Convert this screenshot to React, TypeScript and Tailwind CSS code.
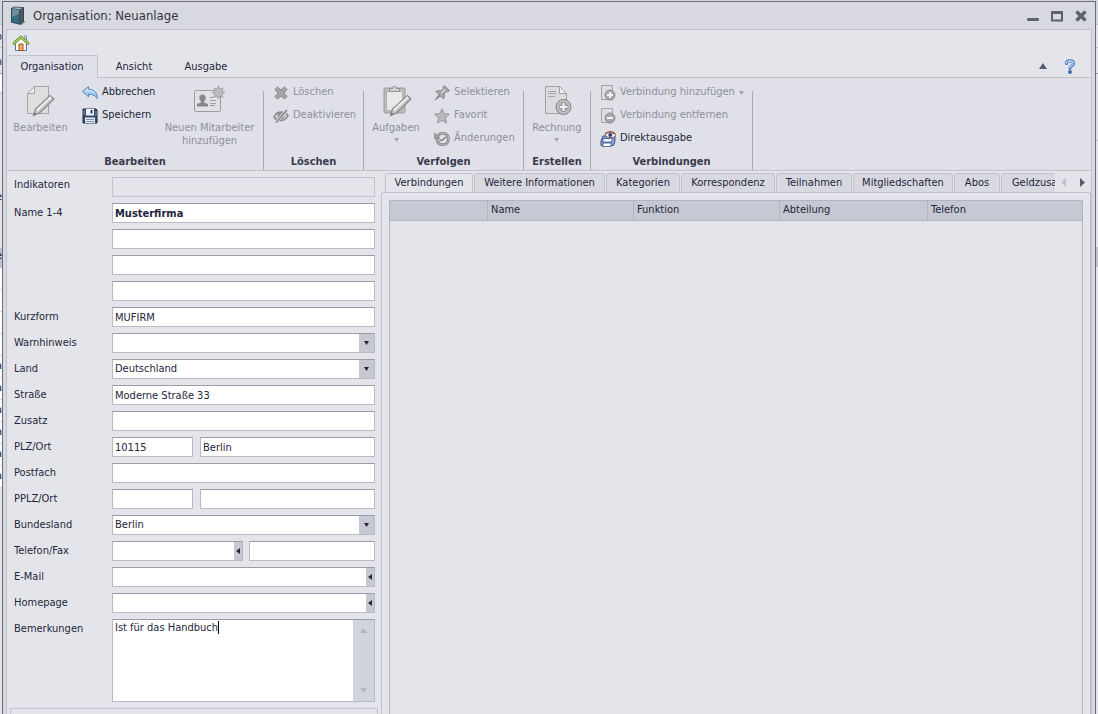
import React, { useState } from 'react';

type IconProps = { className?: string };

const HomeIcon = () => (
  <svg width="18" height="18" viewBox="0 0 18 18">
    <path d="M3.500 9v7.500h11V9L9 4z" fill="#fdfdff" stroke="#5a74ad" />
    <path d="M12.500 2h2v4l-2-2z" fill="#fff" stroke="#5a74ad" strokeWidth=".8" />
    <path d="M7 10h4v6.500H7z" fill="#f3b064" stroke="#a5501c" />
    <path d="M2 9.300L9 3l7 6.300" fill="none" stroke="#55801f" strokeWidth="2.800" strokeLinecap="round" strokeLinejoin="round" />
    <path d="M2 9.200L9 3l7 6.200" fill="none" stroke="#b9e066" strokeWidth="1.400" strokeLinecap="round" strokeLinejoin="round" />
  </svg>
);

const AppIcon = () => (
  <svg width="18" height="20" viewBox="0 0 18 20">
    <path d="M11 14l5 1.500-4 3.500z" fill="#8b8d96" opacity=".7" />
    <path d="M1 2l4-1.500 9 .8v14L10.500 19 1 16.500z" fill="#34464f" />
    <path d="M2 3l7 1v13.500L2 16z" fill="#2f6e86" />
    <path d="M2 3l7 1v4L2 11z" fill="#6d8f9d" />
    <path d="M9.500 4L13 2v12.500l-3 3.500z" fill="#50585f" />
    <path d="M2 2.300l3.500-1 7 .7-3 1.500z" fill="#a9b4ba" />
  </svg>
);

const EditPageIcon = () => (
  <svg width="32" height="32" viewBox="0 0 32 32">
    <path d="M10.500 1.500h14v27h-21v-20z" fill="#dededf" stroke="#a3a3a6" />
    <path d="M10.500 1.500v7h-7z" fill="#ececed" stroke="#a3a3a6" />
    <path d="M9.500 30.500l2-6.500L26 10.500l4 3.500-14.500 14z" fill="#c6c6c8" stroke="#88888b" strokeWidth="1.200" />
    <path d="M12.800 25.500L27 12" stroke="#f0f0f0" strokeWidth="1.800" />
    <path d="M9.500 30.500l1.200-3.300 2 1.800z" fill="#77777a" />
  </svg>
);

const UndoIcon = () => (
  <svg width="16" height="16" viewBox="0 0 16 16">
    <path d="M.6 6.500L6.500 1.800v2.500c5.500.2 8.700 3 8.700 9.200-1.800-3-4.200-4.300-8.700-4.300v2.600z" fill="#a5d0f3" stroke="#4782bf" strokeLinejoin="round" />
    <path d="M2.500 6.500L5.700 4v1.500c3.300 0 5.500.7 7 2.500" fill="none" stroke="#e2f2fd" />
  </svg>
);

const SaveIcon = () => (
  <svg width="16" height="16" viewBox="0 0 16 16">
    <path d="M1 1h13l1 1v13H1z" fill="#34496a" stroke="#1f2b42" />
    <path d="M4 1h8v6.500H4z" fill="#eef3f9" />
    <path d="M8.500 2h2v3.500h-2z" fill="#2c3f5e" />
    <path d="M3 9.500h10V15H3z" fill="#e4ebf4" />
    <path d="M4 11.500h8M4 13.500h8" stroke="#7a93b3" />
    <path d="M2 2v5M14 3v5" stroke="#7f9cc0" />
  </svg>
);

const NewPersonIcon = () => (
  <svg width="32" height="32" viewBox="0 0 32 32">
    <rect x="1.500" y="5.500" width="26" height="21" rx="1.500" fill="#e2e2e4" stroke="#9d9da0" />
    <path d="M9.500 9.500c2.100 0 3.200 1.300 3.200 3.200 0 1.500-.7 2.800-1.600 3.500v1.300l3.900 1.500v2.500H4v-2.500l3.900-1.500v-1.300c-.9-.7-1.600-2-1.600-3.500 0-1.900 1.100-3.200 3.200-3.200z" fill="#88888b" />
    <path d="M17 12.500h4M17 15.500h6M17 18.500h6M17 20.500h5" stroke="#a0a0a3" />
    <path d="M25.500 1l1.300 3.300 3.300-1.500-1.300 3.400L32 7.500l-3.200 1.400 1.300 3.300-3.300-1.400L25.500 14l-1.400-3.200-3.300 1.400 1.400-3.300L19 7.500l3.200-1.300-1.400-3.400 3.300 1.500z" fill="#bcbcbe" stroke="#9d9da0" strokeWidth=".8" />
  </svg>
);

const CrossIcon = () => (
  <svg width="16" height="16" viewBox="0 0 16 16">
    <path d="M4.500 2L8 5 11.500 2 14.200 4.500 11 8l3.200 3.500-2.700 2.500L8 11 4.500 14 1.800 11.500 5 8 1.800 4.500z" fill="#a5a5a7" stroke="#8f8f92" strokeLinejoin="round" />
  </svg>
);

const EyeOffIcon = () => (
  <svg width="16" height="16" viewBox="0 0 16 16">
    <path d="M1 9C2.500 5.500 5.500 4 8.500 4S13.500 5 15 7.500c-1.500 3.500-4.500 5-7.500 5S2.500 11.500 1 9z" fill="#d0d0d2" stroke="#8c8c8f" strokeWidth="1.600" />
    <circle cx="8" cy="8" r="3" fill="#a0a0a3" stroke="#858588" />
    <path d="M3 14.500L14 2" stroke="#dfe0e8" strokeWidth="3" />
    <path d="M3 14.500L14 2" stroke="#87878a" strokeWidth="1.600" />
  </svg>
);

const ClipboardIcon = () => (
  <svg width="32" height="32" viewBox="0 0 32 32">
    <rect x="4" y="3" width="21" height="25" rx="1.500" fill="#bdbdbf" stroke="#98989b" />
    <path d="M6.500 6.500h16v19h-16z" fill="#e9e9eb" stroke="#b0b0b3" />
    <path d="M9.500 6.500v-3h3c0-3 4-3 4 0h3v3z" fill="#d2d2d4" stroke="#8f8f92" />
    <path d="M10.500 30.500l2-6.500L27.500 10.500l3.500 3.500-14.500 14z" fill="#c6c6c8" stroke="#858588" strokeWidth="1.200" />
    <path d="M13.500 25.500L28 12" stroke="#f0f0f0" strokeWidth="1.800" />
    <path d="M10.500 30.500l1.200-3.300 2 1.800z" fill="#77777a" />
  </svg>
);

const PinIcon = () => (
  <svg width="16" height="16" viewBox="0 0 16 16">
    <path d="M1 15l5-6.500L8 10z" fill="#8a8a8d" stroke="#8a8a8d" strokeLinejoin="round" />
    <path d="M2 6.500c2-1.200 3.700-1 5-.5L9.500 3.500 9 2l1.500-1.300 5 4.800L14 7l-1.500-.5L10 9c.8 1.500.8 3.300-.5 5z" fill="#a9a9ab" stroke="#858588" strokeLinejoin="round" />
    <path d="M7.500 8l3.500-3.500" stroke="#d8d8da" strokeWidth="1.400" />
  </svg>
);

const StarIcon = () => (
  <svg width="16" height="16" viewBox="0 0 16 16">
    <path d="M8 .8l2.200 4.800 5.200.6-3.900 3.600 1.100 5.200L8 12.400 3.400 15l1.100-5.200L.6 6.200l5.200-.6z" fill="#b9b9bb" stroke="#98989b" strokeLinejoin="round" />
  </svg>
);

const HistoryIcon = () => (
  <svg width="16" height="16" viewBox="0 0 16 16">
    <circle cx="8.700" cy="8" r="5.800" fill="#e3e3e5" stroke="#8f8f92" strokeWidth="3" />
    <circle cx="8.700" cy="8" r="6" fill="none" stroke="#bcbcbe" />
    <path d="M.5 2v5.500H6z" fill="#a5a5a8" stroke="#88888b" strokeWidth=".8" />
    <path d="M5.500 9.500l3-.5L12 6" fill="none" stroke="#7f7f82" strokeWidth="1.400" />
  </svg>
);

const InvoiceIcon = () => (
  <svg width="32" height="32" viewBox="0 0 32 32">
    <path d="M4.500 1.500h14l7 7v20h-21z" fill="#dcdcde" stroke="#a0a0a3" />
    <path d="M18.500 1.500v7h7z" fill="#f0f0f1" stroke="#a0a0a3" />
    <path d="M7 6.500h8M7 8.500h8M7 11.500h7" stroke="#a5a5a8" />
    <circle cx="22.500" cy="22" r="7.500" fill="#b4b4b6" stroke="#858588" />
    <circle cx="22.500" cy="22" r="6" fill="none" stroke="#d0d0d2" />
    <path d="M21 17.500h3v3h3v3h-3v3h-3v-3h-3v-3h3z" fill="#f1f1f2" stroke="#858588" strokeWidth=".8" />
  </svg>
);

const PageBadgeIcon = ({ plus }: { plus?: boolean }) => (
  <svg width="16" height="16" viewBox="0 0 16 16">
    <path d="M1.500.5h11v14h-11z" fill="#dedee0" stroke="#a3a3a6" />
    <circle cx="10" cy="10" r="5" fill="#a8a8aa" stroke="#8f8f92" />
    <path d="M7 10h6" stroke="#f4f4f4" strokeWidth="2" />
    {plus && <path d="M10 7v6" stroke="#f4f4f4" strokeWidth="2" />}
  </svg>
);

const DirectPrintIcon = () => (
  <svg width="16" height="16" viewBox="0 0 16 16">
    <path d="M3 5l-2 5v4.500h12.500L15 10V5z" fill="#8ba6d6" stroke="#34508f" />
    <path d="M3.500 7.500h9l-1 3.500h-9z" fill="#f7f9fd" stroke="#34508f" strokeWidth=".8" />
    <path d="M3.500 12h7.500v3.500H2.500z" fill="#fff" stroke="#34508f" strokeWidth=".8" />
    <path d="M5 4c2-3 8-3.500 10.500.5-2 3-8 3-10.500-.5z" fill="#fff" stroke="#8a5b4b" />
    <path d="M5 3c2-3 8-3.500 10.500.5" fill="none" stroke="#a4604a" strokeWidth="1.200" />
    <circle cx="10.300" cy="4" r="2" fill="#283f78" />
  </svg>
);

const HelpIcon = () => (
  <svg width="12" height="15" viewBox="0 0 12 15">
    <path d="M2.500 4.500C2.500 1 9.500 1 9.500 4.500 9.500 7 6 6.500 6 9.300" fill="none" stroke="#4a7dbb" strokeWidth="3.200" strokeLinecap="round" />
    <path d="M2.500 4.300C2.500 1.200 9.300 1.200 9.300 4.400 9.300 6 6.500 6.500 6 8.500" fill="none" stroke="#b9d8f3" strokeWidth="1.300" strokeLinecap="round" />
    <circle cx="6" cy="13" r="1.900" fill="#3468ab" />
  </svg>
);

const Down = ({ className }: IconProps) => (
  <svg width="5" height="4" viewBox="0 0 5 4" className={className}>
    <path d="M0 0h5L2.500 4z" fill="currentColor" />
  </svg>
);

const Left = () => (
  <svg width="4" height="6" viewBox="0 0 4 6">
    <path d="M4 0v6L0 3z" fill="currentColor" />
  </svg>
);

const ScrollArrow = ({ className }: IconProps) => (
  <svg width="7" height="5" viewBox="0 0 7 5" className={className}>
    <path d="M0 0h7L3.500 5z" fill="currentColor" />
  </svg>
);

type ButtonProps = {
  icon: React.ReactNode;
  children: React.ReactNode;
  disabled?: boolean;
  menu?: boolean;
};

const SmallButton = ({ icon, children, disabled, menu }: ButtonProps) => (
  <button type="button" disabled={disabled} className="flex h-[23px] items-center gap-1 whitespace-nowrap text-[#25253a] disabled:text-[#8f8e9f]">
    {icon}
    <span>{children}</span>
    {menu && <Down className="text-[#a3a2ae]" />}
  </button>
);

const LargeButton = ({ icon, children, menu }: ButtonProps) => (
  <button type="button" disabled className="flex flex-col items-center pt-1 leading-[13px] text-[#8f8e9f]">
    {icon}
    <span className="mt-1">{children}</span>
    {menu && <Down className="mt-1 text-[#a3a2ae]" />}
  </button>
);

const RibbonGroup = ({ title, className, children }: { title: string; className: string; children: React.ReactNode }) => (
  <section className={`flex shrink-0 ${className}`}>
    <div className="flex flex-1 flex-col">
      <div className="flex h-[74px] items-start">{children}</div>
      <h2 className="text-center font-bold leading-4 text-[#3b3b4b]">{title}</h2>
    </div>
    <div className="mt-[10px] w-px bg-[#a9aab3]" />
  </section>
);

const fieldBorder = 'border border-[#b9bac6] border-t-[#9b9ba9]';
const inputClass = `h-5 min-w-0 bg-white px-[2px] outline-none ${fieldBorder}`;

const Row = ({ label, id, children }: { label: string; id?: string; children: React.ReactNode }) => (
  <div className="flex">
    <label htmlFor={id} className="w-[98px] shrink-0 leading-5">{label}</label>
    <div className="flex min-w-0 flex-1">{children}</div>
  </div>
);

const SelectField = ({ id, value }: { id: string; value: string }) => (
  <div className={`flex h-5 flex-1 bg-white ${fieldBorder}`}>
    <select id={id} defaultValue={value} className="flex-1 appearance-none px-[2px] pt-px outline-none">
      <option>{value}</option>
    </select>
    <span className="pointer-events-none flex w-[15px] items-center justify-center bg-[#c6c8d3]">
      <Down />
    </span>
  </div>
);

const DialField = ({ id, label, className }: { id: string; label: string; className: string }) => (
  <div className={`flex h-5 bg-white ${fieldBorder} ${className}`}>
    <input id={id} className="min-w-0 flex-1 px-[2px] outline-none" />
    <button type="button" aria-label={label} className="flex w-2 items-center justify-center bg-[#c6c8d3]">
      <Left />
    </button>
  </div>
);

const Form = () => (
  <form className="flex w-[374px] shrink-0 flex-col">
    <div className="flex flex-col gap-[6px] pl-[7px] pr-[6px] pt-[6px]">
      <div className="flex">
        <label htmlFor="indikatoren" className="w-[98px] shrink-0 leading-4">Indikatoren</label>
        <input id="indikatoren" readOnly className="h-5 min-w-0 flex-1 border border-[#c3c4ce] bg-transparent outline-none" />
      </div>
      <Row label="Name 1-4" id="name1">
        <div className="flex flex-1 flex-col gap-[6px]">
          <input id="name1" defaultValue="Musterfirma" className={`${inputClass} font-bold`} />
          <input aria-label="Name 2" className={inputClass} />
          <input aria-label="Name 3" className={inputClass} />
          <input aria-label="Name 4" className={inputClass} />
        </div>
      </Row>
      <Row label="Kurzform" id="kurzform">
        <input id="kurzform" defaultValue="MUFIRM" className={`${inputClass} flex-1`} />
      </Row>
      <Row label="Warnhinweis" id="warnhinweis">
        <SelectField id="warnhinweis" value="" />
      </Row>
      <Row label="Land" id="land">
        <SelectField id="land" value="Deutschland" />
      </Row>
      <Row label="Straße" id="strasse">
        <input id="strasse" defaultValue="Moderne Straße 33" className={`${inputClass} flex-1`} />
      </Row>
      <Row label="Zusatz" id="zusatz">
        <input id="zusatz" className={`${inputClass} flex-1`} />
      </Row>
      <Row label="PLZ/Ort" id="plz">
        <input id="plz" defaultValue="10115" className={`${inputClass} mr-[7px] w-[81px]`} />
        <input aria-label="Ort" defaultValue="Berlin" className={`${inputClass} flex-1`} />
      </Row>
      <Row label="Postfach" id="postfach">
        <input id="postfach" className={`${inputClass} flex-1`} />
      </Row>
      <Row label="PPLZ/Ort" id="pplz">
        <input id="pplz" className={`${inputClass} mr-[7px] w-[81px]`} />
        <input aria-label="Postfach Ort" className={`${inputClass} flex-1`} />
      </Row>
      <Row label="Bundesland" id="bundesland">
        <SelectField id="bundesland" value="Berlin" />
      </Row>
      <Row label="Telefon/Fax" id="telefon">
        <DialField id="telefon" label="Anrufen" className="mr-[6px] w-[131px]" />
        <input aria-label="Fax" className={`${inputClass} flex-1`} />
      </Row>
      <Row label="E-Mail" id="email">
        <DialField id="email" label="E-Mail schreiben" className="flex-1" />
      </Row>
      <Row label="Homepage" id="homepage">
        <DialField id="homepage" label="Homepage öffnen" className="flex-1" />
      </Row>
      <Row label="Bemerkungen" id="bemerkungen">
        <div className={`relative flex h-[83px] flex-1 bg-white ${fieldBorder}`}>
          <textarea id="bemerkungen" defaultValue="Ist für das Handbuch" className="min-w-0 flex-1 resize-none overflow-hidden px-[2px] leading-4 outline-none" />
          {/* Text cursor */}
          <span className="absolute left-[105px] top-[1px] h-[13px] w-px bg-black" />
          <div className="flex w-[21px] flex-col items-center justify-between bg-[#d2d4dc] py-2 text-[#b3b4be]">
            <ScrollArrow className="rotate-180" />
            <ScrollArrow />
          </div>
        </div>
      </Row>
    </div>
    <div className="mx-[3px] mt-[6px] flex-1 border border-b-0 border-[#c3c4ce]" />
  </form>
);

const TABS = [
  { name: 'Verbindungen', width: 'w-[88px]' },
  { name: 'Weitere Informationen', width: 'w-[131px]' },
  { name: 'Kategorien', width: 'w-[74px]' },
  { name: 'Korrespondenz', width: 'w-[94px]' },
  { name: 'Teilnahmen', width: 'w-[76px]' },
  { name: 'Mitgliedschaften', width: 'w-[100px]' },
  { name: 'Abos', width: 'w-[46px]' },
  { name: 'Geldzusagen', width: 'w-[86px]' },
];

const Details = () => {
  const [active, setActive] = useState('Verbindungen');

  return (
    <div className="flex min-w-0 flex-1 flex-col pt-[2px]">
      <div className="flex h-[19px]">
        <div role="tablist" className="flex min-w-0 flex-1 gap-px overflow-hidden pl-1">
          {TABS.map((tab) => (
            <button
              key={tab.name}
              type="button"
              role="tab"
              aria-selected={tab.name === active}
              onClick={() => setActive(tab.name)}
              className={`shrink-0 whitespace-nowrap rounded-t-[3px] border border-b-0 border-[#c1c2cc] pt-px ${tab.width} ${
                tab.name === active ? 'bg-[#e4e5ea]' : 'bg-[#d8d9e0]'
              }`}
            >
              {tab.name}
            </button>
          ))}
        </div>
        <div className="flex w-9 items-center justify-between px-[6px]">
          <button type="button" aria-label="Zurück" className="text-[#c1c2cc]">
            <svg width="5" height="9" viewBox="0 0 5 9"><path d="M5 0v9L0 4.500z" fill="currentColor" /></svg>
          </button>
          <button type="button" aria-label="Weiter" className="text-[#5a5b6c]">
            <svg width="5" height="9" viewBox="0 0 5 9"><path d="M0 0v9l5-4.500z" fill="currentColor" /></svg>
          </button>
        </div>
      </div>
      <div className="flex flex-1 flex-col rounded-t-[2px] border-x border-t border-[#c1c2cc] px-[7px] pt-[7px]">
        <div className="flex-1 border border-b-0 border-[#b3b5c4]">
          <table className="w-full table-fixed border-separate border-spacing-0 text-left">
            <thead>
              <tr className="h-5 bg-[#c6c8d3]">
                <th className="w-[98px] border-b border-r border-[#b3b5c4]" />
                <th className="w-[146px] border-b border-r border-[#b3b5c4] pl-[3px] font-normal">Name</th>
                <th className="w-[146px] border-b border-r border-[#b3b5c4] pl-[3px] font-normal">Funktion</th>
                <th className="w-[148px] border-b border-r border-[#b3b5c4] pl-[3px] font-normal">Abteilung</th>
                <th className="border-b border-[#b3b5c4] pl-[3px] font-normal">Telefon</th>
              </tr>
            </thead>
            <tbody />
          </table>
        </div>
      </div>
    </div>
  );
};

const BACKDROP_ROWS = ['a', 'a', 'a', 'a', 'a', 'a'];

/* Sliver of the main window that stays visible beside the dialog */
const Backdrop = ({ text }: { text?: boolean }) => (
  <div aria-hidden="true" className="flex w-[2px] shrink-0 flex-col overflow-hidden bg-[#e4e5ea]">
    <div className="h-[25px] border-b border-[#c1c2cc] bg-[#d3d5dd]" />
    <div className="flex h-[23px] justify-end border-b border-[#c1c2cc] leading-6">{text && 'o'}</div>
    <div className="flex h-[26px] justify-end border-b border-[#9b9ba9] leading-7">{text && 'n'}</div>
    <div className={text ? 'h-[19px] border-b border-[#c1c2cc] bg-white' : 'h-[67px] border-b border-[#c1c2cc] bg-[#dfe0e8]'} />
    <div className={text ? 'h-[94px]' : 'h-[106px]'} />
    {text && <div className="flex h-[61px] items-start justify-end leading-5">e</div>}
    <div className="flex h-5 justify-end bg-[#c1c2cc] leading-4">{text && 'e'}</div>
    {text && (
      <div className="flex flex-col bg-white">
        <div className="h-[22px] border-b border-[#d3d5dd]" />
        <div className="h-[22px] border-b border-[#d3d5dd]" />
        <div className="h-[22px] border-b border-[#d3d5dd]" />
        <div className="h-[22px] border-b border-[#d3d5dd]" />
        {BACKDROP_ROWS.map((row, i) => (
          <div key={i} className="flex h-[22px] justify-end border-b border-[#d3d5dd] leading-5">{row}</div>
        ))}
      </div>
    )}
  </div>
);

const App = () => {
  return (
    <div className="flex min-h-screen bg-[#d3d5dd] font-['DejaVu_Sans_Condensed','DejaVu_Sans',sans-serif] text-[11px] text-[#25253a]">
      <Backdrop text />
      <div className="mt-px flex min-w-0 flex-1 flex-col border-x border-t border-[#696a7a] bg-[#d8d9e0]">
        {/* Title bar */}
        <header className="flex h-[27px] items-center pl-[7px] pr-2">
          <AppIcon />
          <h1 className="ml-[5px] flex-1 pt-px text-[13px] text-[#33333f]">Organisation: Neuanlage</h1>
          <div className="flex gap-3 text-[#5f6072]">
            <button type="button" aria-label="Minimieren">
              <svg width="12" height="12" viewBox="0 0 12 12"><rect y="8" width="12" height="3" rx="1" fill="currentColor" /></svg>
            </button>
            <button type="button" aria-label="Maximieren">
              <svg width="12" height="12" viewBox="0 0 12 12"><path d="M1 2.500h10v8H1z" fill="none" stroke="currentColor" strokeWidth="2" /><path d="M0 2.500h12" stroke="currentColor" strokeWidth="3" /></svg>
            </button>
            <button type="button" aria-label="Schließen">
              <svg width="12" height="12" viewBox="0 0 12 12"><path d="M1.500 1.500l9 9M10.500 1.500l-9 9" stroke="currentColor" strokeWidth="3.400" /></svg>
            </button>
          </div>
        </header>

        <div className="mx-[3px] flex flex-1 flex-col border-x border-t border-[#bfc1cb] bg-[#e4e5ea]">
          <div className="flex h-[25px] items-center pl-[5px]">
            <button type="button" aria-label="Startseite"><HomeIcon /></button>
          </div>

          {/* Ribbon tabs */}
          <nav className="flex h-[23px] items-stretch">
            <button type="button" className="w-[91px] rounded-t-[2px] border border-b-0 border-l-0 border-[#c1c2cc] bg-[#dfe0e8] pt-px">Organisation</button>
            <button type="button" className="w-[72px] border-b border-[#c1c2cc] pt-[2px]">Ansicht</button>
            <button type="button" className="w-[72px] border-b border-[#c1c2cc] pt-[2px]">Ausgabe</button>
            <div className="flex flex-1 items-center justify-end gap-[17px] border-b border-[#c1c2cc] pr-[15px]">
              <button type="button" aria-label="Menüband minimieren" className="text-[#5a5b6c]">
                <svg width="8" height="6" viewBox="0 0 8 6"><path d="M4 0l4 6H0z" fill="currentColor" /></svg>
              </button>
              <button type="button" aria-label="Hilfe"><HelpIcon /></button>
            </div>
          </nav>

          {/* Ribbon */}
          <div className="flex h-[93px] overflow-hidden border-b border-[#c1c2cc] bg-[#dfe0e8] pt-[3px]">
            <RibbonGroup title="Bearbeiten" className="w-[257px]">
              <div className="flex w-[67px] justify-center">
                <LargeButton icon={<EditPageIcon />}>Bearbeiten</LargeButton>
              </div>
              <div className="w-[82px] pl-2">
                <SmallButton icon={<UndoIcon />}>Abbrechen</SmallButton>
                <SmallButton icon={<SaveIcon />}>Speichern</SmallButton>
              </div>
              <div className="flex flex-1 justify-center">
                <LargeButton icon={<NewPersonIcon />}>Neuen Mitarbeiter<br />hinzufügen</LargeButton>
              </div>
            </RibbonGroup>
            <RibbonGroup title="Löschen" className="w-[100px]">
              <div className="pl-[9px]">
                <SmallButton icon={<CrossIcon />} disabled>Löschen</SmallButton>
                <SmallButton icon={<EyeOffIcon />} disabled>Deaktivieren</SmallButton>
              </div>
            </RibbonGroup>
            <RibbonGroup title="Verfolgen" className="w-[160px]">
              <div className="flex w-[64px] justify-center">
                <LargeButton icon={<ClipboardIcon />} menu>Aufgaben</LargeButton>
              </div>
              <div className="pl-[6px]">
                <SmallButton icon={<PinIcon />} disabled>Selektieren</SmallButton>
                <SmallButton icon={<StarIcon />} disabled>Favorit</SmallButton>
                <SmallButton icon={<HistoryIcon />} disabled>Änderungen</SmallButton>
              </div>
            </RibbonGroup>
            <RibbonGroup title="Erstellen" className="w-[67px]">
              <div className="flex flex-1 justify-center">
                <LargeButton icon={<InvoiceIcon />} menu>Rechnung</LargeButton>
              </div>
            </RibbonGroup>
            <RibbonGroup title="Verbindungen" className="w-[162px]">
              <div className="pl-[9px]">
                <SmallButton icon={<PageBadgeIcon plus />} disabled menu>Verbindung hinzufügen</SmallButton>
                <SmallButton icon={<PageBadgeIcon />} disabled>Verbindung entfernen</SmallButton>
                <SmallButton icon={<DirectPrintIcon />}>Direktausgabe</SmallButton>
              </div>
            </RibbonGroup>
          </div>

          <main className="flex flex-1">
            <Form />
            <Details />
          </main>
        </div>
      </div>
      <Backdrop />
    </div>
  );
};

export default App;
